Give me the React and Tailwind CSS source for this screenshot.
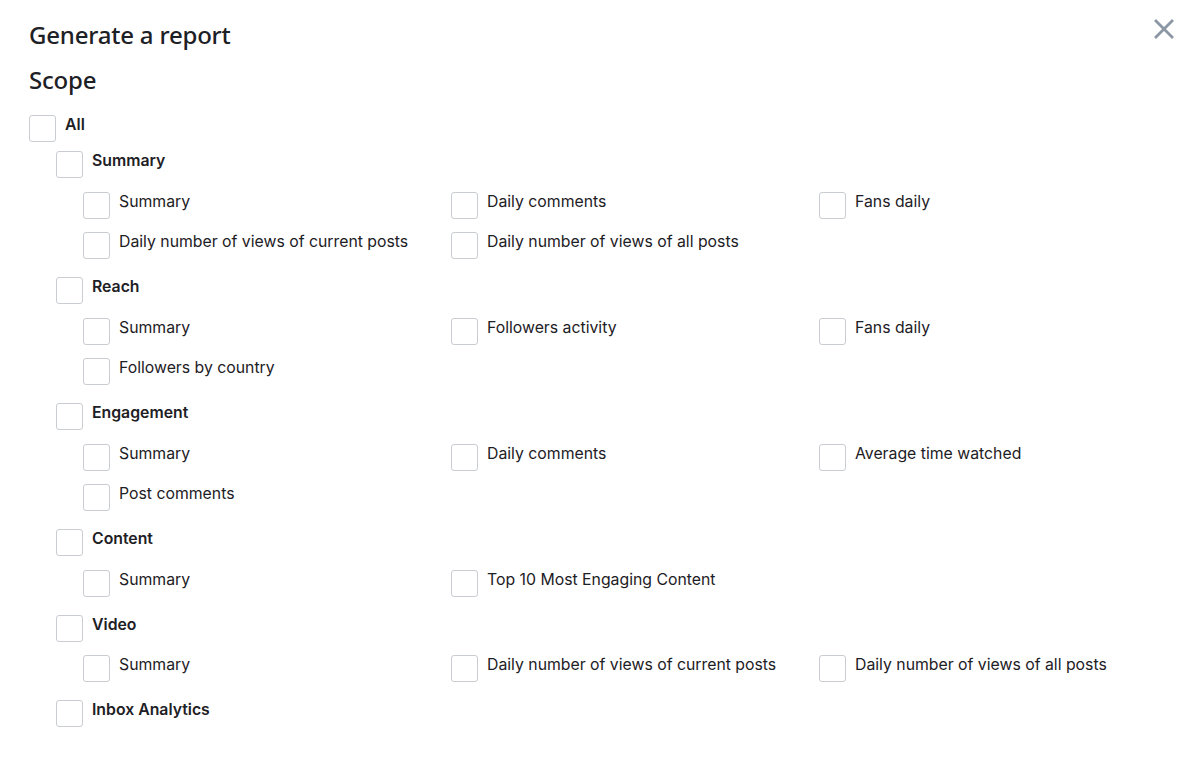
import React from 'react';

const sections = [
  {
    label: 'Summary',
    items: ['Summary', 'Daily comments', 'Fans daily', 'Daily number of views of current posts', 'Daily number of views of all posts'],
  },
  {
    label: 'Reach',
    items: ['Summary', 'Followers activity', 'Fans daily', 'Followers by country'],
  },
  {
    label: 'Engagement',
    items: ['Summary', 'Daily comments', 'Average time watched', 'Post comments'],
  },
  {
    label: 'Content',
    items: ['Summary', 'Top 10 Most Engaging Content'],
  },
  {
    label: 'Video',
    items: ['Summary', 'Daily number of views of current posts', 'Daily number of views of all posts'],
  },
  {
    label: 'Inbox Analytics',
    items: [],
  },
];

function Check({ label, bold }) {
  return (
    <label className="flex items-start gap-[9px] cursor-pointer">
      <span className="w-[27px] h-[27px] shrink-0 rounded-[3px] border-[1.5px] border-[#c9ccd1] bg-white" />
      <span
        className={`text-[15.8px] leading-[20px] text-[#1d2024] ${
          bold ? 'font-semibold' : 'font-normal'
        }`}
      >
        {label}
      </span>
    </label>
  );
}

export default function App() {
  return (
    <div className="relative w-[1200px] h-[757px] bg-white px-[29px] pt-[18px] font-['Inter',sans-serif] overflow-hidden">
      {/* Close */}
      <button className="absolute right-[26px] top-[19px] w-[20px] h-[20px] text-[#8b97a4]">
        <svg viewBox="0 0 20 20" className="w-full h-full" fill="none" stroke="currentColor" strokeWidth="2.8" strokeLinecap="square">
          <path d="M2 2 L18 18 M18 2 L2 18" />
        </svg>
      </button>

      <h1 className="font-['Noto_Sans',sans-serif] font-medium text-[24px] leading-[34px] text-[#1d2024] tracking-[-0.2px]">
        Generate a report
      </h1>
      <h2 className="mt-[11px] font-['Noto_Sans',sans-serif] font-medium text-[24px] leading-[34px] text-[#1d2024] tracking-[-0.2px]">
        Scope
      </h2>

      <div className="mt-[18px]">
        <Check label="All" bold />
        <div className="mt-[9px] pl-[27px] flex flex-col gap-[18px]">
          {sections.map((s) => (
            <div key={s.label}>
              <Check label={s.label} bold />
              {s.items.length > 0 && (
                <div className="mt-[13.5px] pl-[27px] grid grid-cols-[368px_368px_368px] gap-y-[13.5px]">
                  {s.items.map((it, i) => (
                    <Check key={i} label={it} />
                  ))}
                </div>
              )}
            </div>
          ))}
        </div>
      </div>
    </div>
  );
}
